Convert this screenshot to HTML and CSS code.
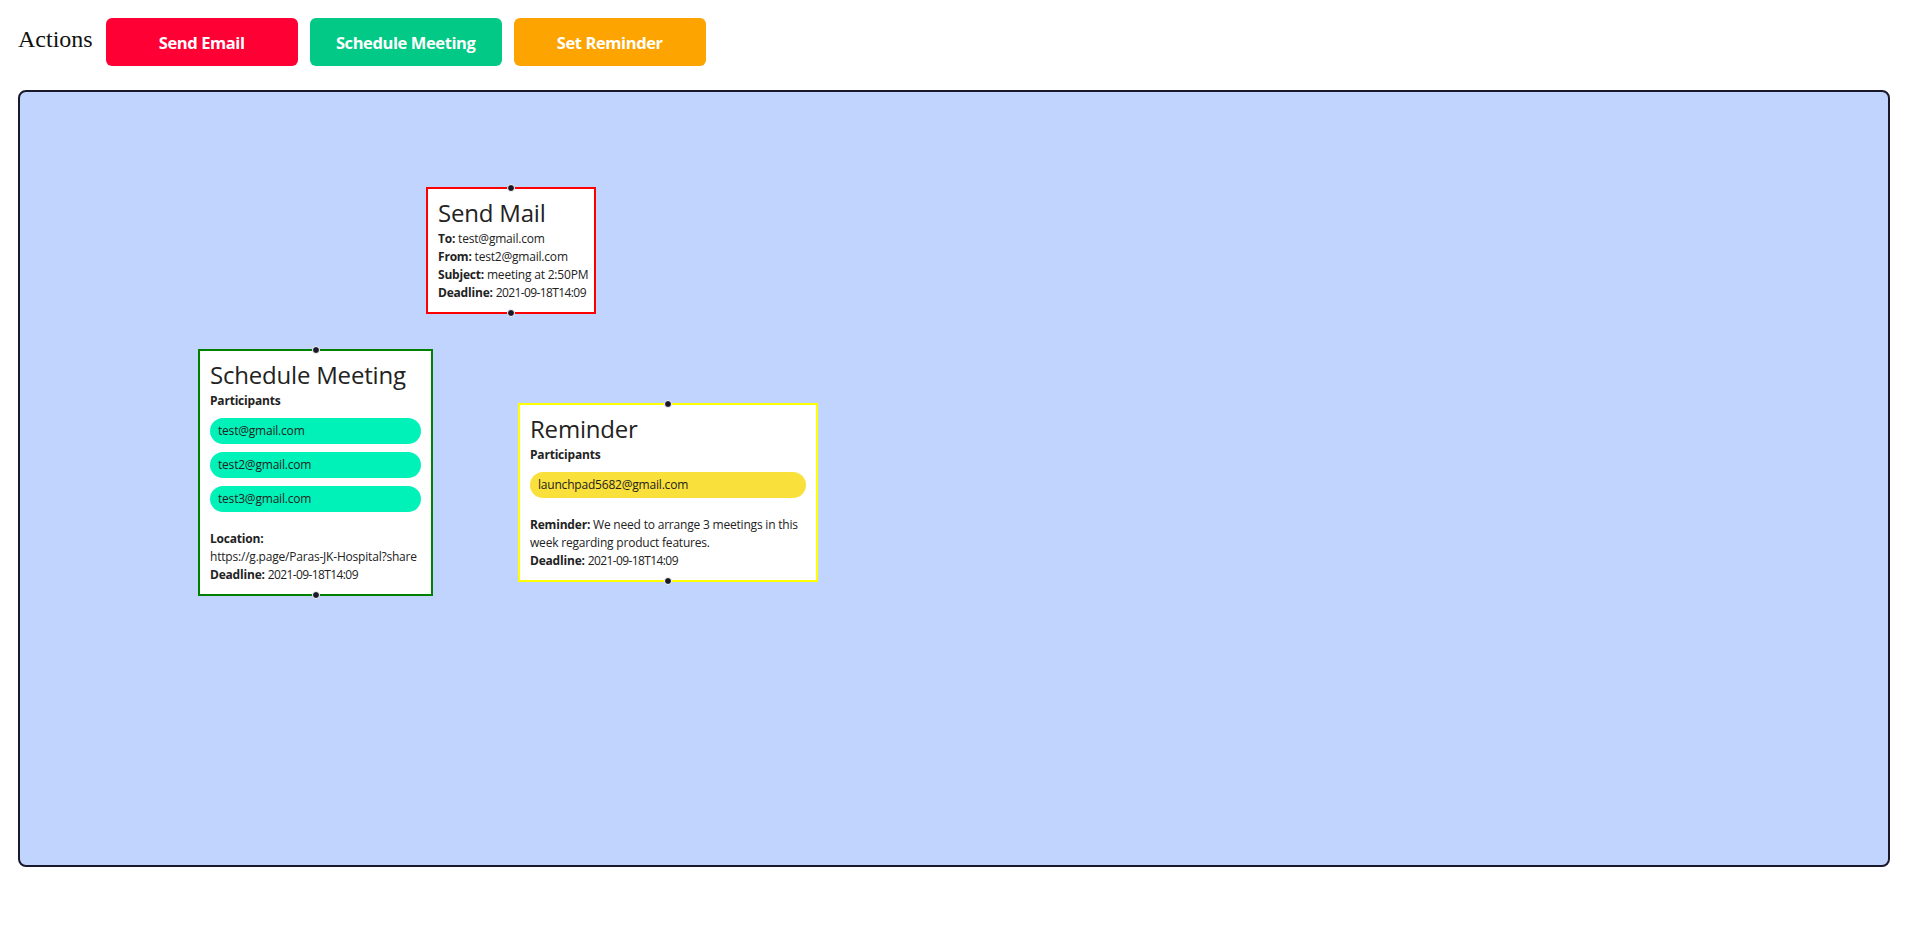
FILE: index.html
```html
<!DOCTYPE html>
<html lang="en">
<head>
<meta charset="utf-8">
<title>Actions</title>
<link rel="stylesheet" href="styles.css">
</head>
<body>
<div class="page">
  <header class="toolbar">
    <span class="toolbar-title">Actions</span>
    <button class="btn btn-mail">Send Email</button>
    <button class="btn btn-meeting">Schedule Meeting</button>
    <button class="btn btn-reminder">Set Reminder</button>
  </header>

  <div class="canvas">
    <div class="node node-mail">
      <span class="handle handle-top"></span>
      <h2 class="node-title">Send Mail</h2>
      <div class="node-line"><b>To:</b> test@gmail.com</div>
      <div class="node-line"><b>From:</b> test2@gmail.com</div>
      <div class="node-line"><b>Subject:</b> meeting at 2:50PM</div>
      <div class="node-line"><b>Deadline:</b> <span class="date">2021-09-18T14:09</span></div>
      <span class="handle handle-bottom"></span>
    </div>

    <div class="node node-meeting">
      <span class="handle handle-top"></span>
      <h2 class="node-title">Schedule Meeting</h2>
      <div class="node-line"><b>Participants</b></div>
      <div class="pills">
        <div class="pill pill-green">test@gmail.com</div>
        <div class="pill pill-green">test2@gmail.com</div>
        <div class="pill pill-green">test3@gmail.com</div>
      </div>
      <div class="node-line"><b>Location:</b></div>
      <div class="node-line">https://g.page/Paras-JK-Hospital?share</div>
      <div class="node-line"><b>Deadline:</b> <span class="date">2021-09-18T14:09</span></div>
      <span class="handle handle-bottom"></span>
    </div>

    <div class="node node-reminder">
      <span class="handle handle-top"></span>
      <h2 class="node-title">Reminder</h2>
      <div class="node-line"><b>Participants</b></div>
      <div class="pills">
        <div class="pill pill-yellow">launchpad5682@gmail.com</div>
      </div>
      <div class="node-line wrap"><b>Reminder:</b> We need to arrange 3 meetings in this week regarding product features.</div>
      <div class="node-line"><b>Deadline:</b> <span class="date">2021-09-18T14:09</span></div>
      <span class="handle handle-bottom"></span>
    </div>
  </div>
</div>
</body>
</html>
```

FILE: styles.css
```css
* {
  box-sizing: border-box;
}

html, body {
  margin: 0;
  padding: 0;
  background: #ffffff;
}

.page {
  padding: 18px 24px 0 18px;
}

.toolbar {
  display: flex;
  align-items: center;
  gap: 12px;
  height: 48px;
}

.toolbar-title {
  font-family: "Liberation Serif", "Times New Roman", serif;
  font-size: 24px;
  color: #111;
  margin-right: 1px;
  margin-bottom: 6px;
}

.btn {
  width: 192px;
  height: 48px;
  border: none;
  border-radius: 6px;
  color: #ffffff;
  font-family: "Open Sans", sans-serif;
  font-weight: 700;
  font-size: 16.5px;
  letter-spacing: -0.4px;
  padding: 0;
  cursor: pointer;
}

.btn-mail { background: #ff0035; }
.btn-meeting { background: #02c985; }
.btn-reminder { background: #fea400; }

.canvas {
  position: relative;
  margin-top: 24px;
  width: 1872px;
  height: 777px;
  background: #c1d4fd;
  border: 2px solid #1a192b;
  border-radius: 8px;
}

.node {
  position: absolute;
  background: #ffffff;
  border: 2px solid;
  padding: 10px;
  color: #222;
  font-family: "Open Sans", sans-serif;
  font-size: 12px;
  line-height: 18px;
  letter-spacing: -0.2px;
}

.node-mail {
  left: 406px;
  top: 95px;
  width: 170px;
  border-color: #ff0000;
}

.node-meeting {
  left: 178px;
  top: 257px;
  width: 235px;
  border-color: #008000;
}

.node-reminder {
  left: 498px;
  top: 311px;
  width: 300px;
  border-color: #ffff00;
}

.node-title {
  margin: 0 0 3px;
  font-size: 24px;
  line-height: 28px;
  font-weight: 400;
  letter-spacing: -0.2px;
  color: #222;
  white-space: nowrap;
}

.node-line {
  white-space: nowrap;
}

.node-line.wrap {
  white-space: normal;
}

.node-line b {
  font-weight: 700;
}

.date {
  letter-spacing: -0.6px;
}

.pills {
  display: flex;
  flex-direction: column;
  gap: 8px;
  margin: 8px 0 18px;
}

.pill {
  height: 26px;
  border-radius: 13px;
  padding: 0 8px;
  display: flex;
  align-items: center;
}

.pill-green { background: #00f2b8; }
.pill-yellow { background: #fae03a; }

.handle {
  position: absolute;
  left: 50%;
  width: 8px;
  height: 8px;
  margin-left: -4px;
  border-radius: 50%;
  background: #1a192b;
  border: 1px solid #ffffff;
}

.handle-top { top: -5px; }
.handle-bottom { bottom: -5px; }
```
